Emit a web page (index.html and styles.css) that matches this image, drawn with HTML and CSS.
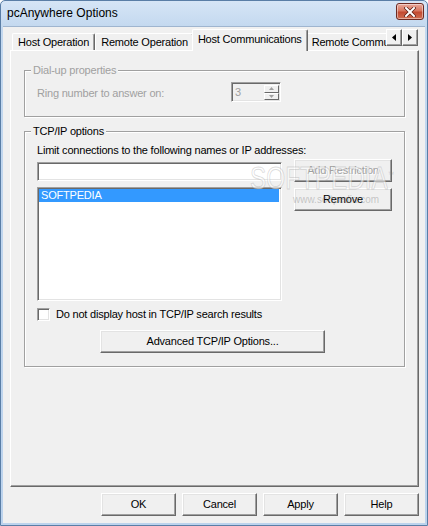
FILE: index.html
```html
<!DOCTYPE html>
<html>
<head>
<meta charset="utf-8">
<title>pcAnywhere Options</title>
<link rel="stylesheet" href="styles.css">
</head>
<body>
<div class="window">
  <div class="titlebar">
    <span class="title">pcAnywhere Options</span>
    <div class="close">
      <svg width="12" height="10" viewBox="0 0 12 10"><path d="M2 1 L10 9 M10 1 L2 9" stroke="#5a1d14" stroke-width="3.4" stroke-linecap="square"/><path d="M2 1 L10 9 M10 1 L2 9" stroke="#fff" stroke-width="2" stroke-linecap="square"/></svg>
    </div>
  </div>
  <div class="client">
    <div class="tabbar">
      <div class="tabs">
        <div class="tab">Host Operation</div>
        <div class="tab">Remote Operation</div>
        <div class="tab selected">Host Communications</div>
        <div class="tab">Remote Communications</div>
      </div>
      <div class="scroll">
        <div class="sbtn"><svg width="4" height="7" viewBox="0 0 4 7"><path d="M4 0 L0 3.5 L4 7 Z" fill="#000"/></svg></div>
        <div class="sbtn"><svg width="4" height="7" viewBox="0 0 4 7"><path d="M0 0 L4 3.5 L0 7 Z" fill="#000"/></svg></div>
      </div>
    </div>
    <div class="panel">
      <fieldset class="group dial">
        <legend class="disabled-text">Dial-up properties</legend>
        <div class="ring-row">
          <span class="ring-label disabled-text">Ring number to answer on:</span>
          <div class="spin">
            <span class="spin-val">3</span>
            <div class="spin-btns">
              <div class="spin-btn"><svg width="5" height="3" viewBox="0 0 5 3"><path d="M2.5 0 L5 3 L0 3 Z" fill="#a0a0a0"/></svg></div>
              <div class="spin-btn"><svg width="5" height="3" viewBox="0 0 5 3"><path d="M0 0 L5 0 L2.5 3 Z" fill="#a0a0a0"/></svg></div>
            </div>
          </div>
        </div>
      </fieldset>
      <fieldset class="group tcp">
        <legend>TCP/IP options</legend>
        <div class="limit-label">Limit connections to the following names or IP addresses:</div>
        <div class="restrict">
          <div class="left-col">
            <div class="input"></div>
            <div class="listbox"><div class="item sel">SOFTPEDIA</div></div>
          </div>
          <div class="right-col">
            <div class="btn btn-add disabled-btn">Add Restriction</div>
            <div class="btn btn-remove">Remove</div>
          </div>
        </div>
        <div class="check-row"><span class="checkbox"></span><span>Do not display host in TCP/IP search results</span></div>
        <div class="btn adv">Advanced TCP/IP Options...</div>
      </fieldset>
    </div>
    <div class="buttons">
      <div class="btn dlg">OK</div>
      <div class="btn dlg">Cancel</div>
      <div class="btn dlg">Apply</div>
      <div class="btn dlg">Help</div>
    </div>
  </div>
  <div class="watermark">SOFTPEDIA<sup>™</sup></div>
  <div class="watermark-url">www.softpedia.com</div>
</div>
</body>
</html>
```
FILE: styles.css
```css
* { box-sizing: border-box; }
html, body { margin: 0; padding: 0; }
body {
  font-family: "Liberation Sans", Arial, sans-serif;
  font-size: 11px;
  letter-spacing: -0.2px;
  color: #000;
  background: #fff;
}
.window {
  position: relative;
  width: 428px;
  height: 526px;
  display: flex;
  flex-direction: column;
  border: 1px solid #5a7ea6;
  border-radius: 5px 5px 0 0;
  background: linear-gradient(#d6e5f6 0px, #c3d8ef 26px, #bcd3ed 100%);
  overflow: hidden;
}
.titlebar {
  height: 25px;
  flex: none;
  display: flex;
  align-items: center;
  padding-left: 6px;
}
.title {
  font-size: 12px;
  letter-spacing: 0;
  color: #000;
  line-height: 15px;
}
.close {
  margin-left: auto;
  margin-right: 3px;
  align-self: flex-start;
  margin-top: 2px;
  width: 28px;
  height: 17px;
  border: 1px solid #6d2a22;
  border-radius: 3px;
  background: linear-gradient(#e9a99c 0%, #d7765f 45%, #c24a31 55%, #cf6e52 100%);
  box-shadow: inset 0 0 0 1px rgba(255,255,255,0.45);
  display: flex;
  align-items: center;
  justify-content: center;
}
.client {
  flex: 1;
  margin: 0 2px 2px 2px;
  background: #f0f0f0;
  display: flex;
  flex-direction: column;
  border-top: 1px solid #9fb5cf;
}
.tabbar {
  display: flex;
  margin: 2px 0 0 7px;
  height: 22px;
  position: relative;
  z-index: 2;
}
.tabs {
  width: 376px;
  height: 22px;
  display: flex;
  align-items: flex-end;
  overflow: hidden;
  padding-left: 2px;
}
.tab {
  flex: none;
  height: 17px;
  margin-bottom: 1px;
  padding: 0 5px;
  display: flex;
  align-items: center;
  white-space: nowrap;
  background: #f0f0f0;
  border-top: 1px solid #fff;
  border-left: 1px solid #fff;
  border-right: 1px solid #696969;
  box-shadow: inset -1px 0 0 #a0a0a0;
  border-radius: 2px 2px 0 0;
  line-height: 13px;
}
.tab.selected {
  height: 22px;
  margin: 0 -2px 0 -2px;
  padding: 0 5px 3px 5px;
  position: relative;
  z-index: 3;
}
.scroll {
  display: flex;
  align-self: flex-start;
}
.sbtn {
  width: 16px;
  height: 17px;
  display: flex;
  align-items: center;
  justify-content: center;
  background: #f0f0f0;
  border: 1px solid;
  border-color: #fff #696969 #696969 #fff;
  box-shadow: inset -1px -1px 0 #a0a0a0;
}
.panel {
  width: 409px;
  height: 437px;
  margin: -1px 0 0 7px;
  position: relative;
  z-index: 1;
  border-top: 1px solid #fff;
  border-left: 1px solid #fff;
  border-right: 1px solid #696969;
  border-bottom: 1px solid #696969;
  box-shadow: inset -1px -1px 0 #a0a0a0;
  padding-left: 13px;
  display: flex;
  flex-direction: column;
}
.group {
  width: 381px;
  margin: 0;
  min-width: 0;
  border: 1px solid #a0a0a0;
  box-shadow: inset 1px 1px 0 #fff, 1px 1px 0 #fff;
  padding: 0 0 0 12px;
}
.group legend {
  margin-left: -6px;
  padding: 0 2px;
  line-height: 13px;
  background: #f0f0f0;
}
.disabled-text { color: #a0a0a0; }
.dial {
  margin-top: 13px;
  padding-top: 5px;
  padding-bottom: 14px;
}
.ring-row {
  display: flex;
  align-items: center;
  height: 20px;
}
.ring-label {
  width: 194px;
  line-height: 13px;
  padding-top: 2px;
}
.spin {
  width: 50px;
  height: 20px;
  display: flex;
  border: 1px solid;
  border-color: #a0a0a0 #fff #fff #a0a0a0;
  box-shadow: inset 1px 1px 0 #696969, inset -1px -1px 0 #e3e3e3;
  background: #f0f0f0;
  padding: 2px 1px 1px 3px;
}
.spin-val {
  flex: 1;
  color: #a0a0a0;
  line-height: 14px;
}
.spin-btns {
  width: 15px;
  display: flex;
  flex-direction: column;
}
.spin-btn {
  flex: 1;
  display: flex;
  align-items: center;
  justify-content: center;
  background: #f0f0f0;
  border: 1px solid;
  border-color: #fff #696969 #696969 #fff;
}
.tcp {
  margin-top: 8px;
  padding-top: 6px;
  padding-bottom: 13px;
}
.limit-label { line-height: 13px; }
.restrict {
  display: flex;
  gap: 12px;
}
.left-col {
  width: 245px;
  display: flex;
  flex-direction: column;
}
.input {
  margin-top: 5px;
  height: 19px;
  background: #fff;
  border: 1px solid;
  border-color: #a0a0a0 #fff #fff #a0a0a0;
  box-shadow: inset 1px 1px 0 #696969, inset -1px -1px 0 #e3e3e3;
}
.listbox {
  margin-top: 6px;
  height: 114px;
  background: #fff;
  border: 1px solid;
  border-color: #a0a0a0 #fff #fff #a0a0a0;
  box-shadow: inset 1px 1px 0 #696969, inset -1px -1px 0 #e3e3e3;
  padding: 1px 2px 2px 1px;
}
.item {
  height: 13px;
  line-height: 13px;
  padding-left: 2px;
  color: #fff;
}
.item.sel { background: #3399ff; }
.right-col {
  width: 98px;
  display: flex;
  flex-direction: column;
}
.btn {
  height: 23px;
  display: flex;
  align-items: center;
  justify-content: center;
  background: #f0f0f0;
  border: 1px solid;
  border-color: #fff #696969 #696969 #fff;
  box-shadow: inset -1px -1px 0 #a0a0a0, inset 1px 1px 0 #e3e3e3;
  white-space: nowrap;
  line-height: 13px;
}
.btn-add { margin-top: 2px; }
.btn-remove { margin-top: 6px; }
.disabled-btn {
  color: #a0a0a0;
  text-shadow: 1px 1px 0 #fff;
}
.check-row {
  margin-top: 7px;
  height: 13px;
  display: flex;
  align-items: center;
  gap: 6px;
  line-height: 13px;
}
.checkbox {
  width: 13px;
  height: 13px;
  background: #fff;
  border: 1px solid;
  border-color: #a0a0a0 #fff #fff #a0a0a0;
  box-shadow: inset 1px 1px 0 #696969, inset -1px -1px 0 #e3e3e3;
}
.adv {
  margin: 9px 0 0 63px;
  width: 225px;
}
.buttons {
  margin-top: 6px;
  display: flex;
  justify-content: flex-end;
  gap: 6px;
  padding-right: 6px;
}
.dlg { width: 75px; }
.watermark {
  position: absolute;
  left: 249px;
  top: 158px;
  z-index: 5;
  font-family: "Liberation Sans", Arial, sans-serif;
  font-size: 32px;
  line-height: 32px;
  letter-spacing: 0;
  white-space: nowrap;
  transform: scaleX(0.76);
  transform-origin: left top;
  color: rgba(255,255,255,0.55);
  -webkit-text-stroke: 1px rgba(140,140,140,0.3);
  pointer-events: none;
}
.watermark sup {
  font-size: 8px;
  -webkit-text-stroke: 0;
  color: rgba(120,120,120,0.35);
}
.watermark-url {
  position: absolute;
  left: 292px;
  top: 193px;
  z-index: 5;
  font-size: 10px;
  letter-spacing: 0;
  color: rgba(110,110,110,0.35);
  pointer-events: none;
}
```
